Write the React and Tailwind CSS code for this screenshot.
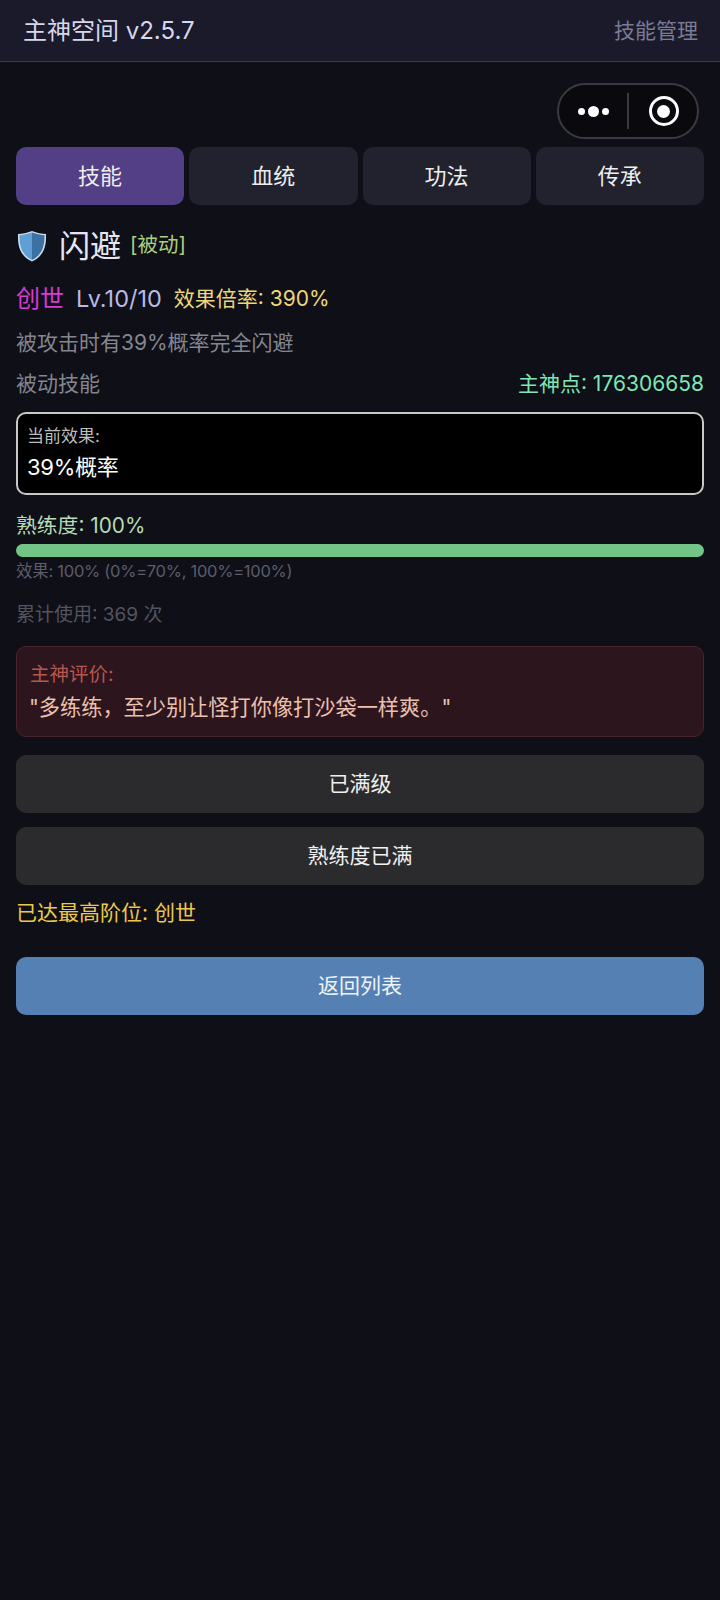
import React from 'react'

const tabs = ['技能', '血统', '功法', '传承']

function Shield() {
	return (
		<svg width="30" height="32" viewBox="0 0 30 32" className="shrink-0">
			<path d="M15 1 C20 3 25 4 29 4 C29.5 16 27 26 15 31.5 C3 26 .5 16 1 4 C5 4 10 3 15 1 Z" fill="#c9dcee" />
			<path d="M15 2.500 C11 4 6 5 2.500 5.200 C2.300 16 5 25 15 30 Z" fill="#5f9fd6" />
			<path d="M15 2.500 C19 4 24 5 27.500 5.200 C27.700 16 25 25 15 30 Z" fill="#3c72a3" />
		</svg>
	)
}

function Capsule() {
	return (
		<div className="absolute left-[557px] top-[83px] w-[142px] h-[56px] rounded-full border-2 border-[#3a3a40] bg-[#0a0a0e] flex items-center">
			<div className="w-[68px] flex items-center justify-center gap-[3px] pl-[1px]">
				<span className="w-[7px] h-[7px] rounded-full bg-white"></span>
				<span className="w-[11px] h-[11px] rounded-full bg-white"></span>
				<span className="w-[7px] h-[7px] rounded-full bg-white"></span>
			</div>
			<div className="w-[2px] h-[36px] bg-[#3a3a40]"></div>
			<div className="flex-1 flex items-center justify-center pl-[1px]">
				<div className="w-[30px] h-[30px] rounded-full border-[3px] border-white flex items-center justify-center">
					<span className="w-[13px] h-[13px] rounded-full bg-white"></span>
				</div>
			</div>
		</div>
	)
}

export default function App() {
	return (
		<div className="relative w-[720px] h-[1600px] bg-[#0e0f17] text-white font-['Inter','Noto_Sans_CJK_SC',sans-serif] overflow-hidden">
			<div className="h-[62px] bg-[#1a1a2a] border-b border-[#3a3b4c] pl-[23px] pr-[22px] flex items-center justify-between">
				<span className="text-[24px] text-[#d6d6ee]">主神空间 v2.5.7</span>
				<span className="text-[21px] text-[#7b7b95]">技能管理</span>
			</div>
			<Capsule />

			<div className="px-[16px] pt-[85px]">
				<div className="grid grid-cols-4 gap-[5px] h-[58px]">
					{tabs.map((t, i) => (
						<div key={t} className={`rounded-[10px] flex items-center justify-center text-[22px] text-[#eeeeee] ${i === 0 ? 'bg-[#523f85]' : 'bg-[#22222f]'}`}>{t}</div>
					))}
				</div>

				<div className="flex items-center mt-[24px] h-[34px] pl-[1px]">
					<Shield />
					<span className="ml-[12px] -mt-[2px] text-[31px] leading-none text-[#e6e6f2]">闪避</span>
					<span className="ml-[9px] -mt-[1px] text-[20.500px] text-[#a9cf7f]">[被动]</span>
				</div>

				<div className="flex items-center mt-[20px] h-[32px]">
					<span className="text-[24px] text-[#d93ad8]">创世</span>
					<span className="ml-[12px] text-[23.500px] text-[#b9b9e6]">Lv.10/10</span>
					<span className="ml-[12px] text-[21px] text-[#eed67a]">效果倍率: 390%</span>
				</div>

				<div className="mt-[13px] h-[30px] flex items-center text-[21px] text-[#85858f]">被攻击时有39%概率完全闪避</div>

				<div className="mt-[11px] h-[30px] flex items-center justify-between">
					<span className="text-[21px] text-[#85858f]">被动技能</span>
					<span className="text-[21px] text-[#7fe5b5]">主神点: 176306658</span>
				</div>

				<div className="mt-[13px] h-[83px] rounded-[10px] border-2 border-[#c8c8c8] bg-black px-[9px] pt-[8px]">
					<div className="text-[17px] leading-[28px] text-[#bdbdbd]">当前效果:</div>
					<div className="text-[22px] leading-[34px] tracking-[-0.3px] text-white">39%概率</div>
				</div>

				<div className="mt-[15px] h-[32px] flex items-center text-[20.800px] text-[#b5dcb5]">熟练度: 100%</div>
				<div className="mt-[2px] h-[13px] rounded-full bg-[#72c585]"></div>
				<div className="mt-[1px] h-[26px] flex items-center text-[16.500px] tracking-[-0.27px] text-[#5c5c6b]">效果: 100% (0%=70%, 100%=100%)</div>
				<div className="mt-[16px] h-[30px] flex items-center text-[19px] text-[#54545f]">累计使用: 369 次</div>

				<div className="mt-[16px] h-[91px] rounded-[10px] border border-[#47232b] bg-[#2c151d] pl-[12px] pr-[13px] pt-[13px]">
					<div className="pl-[1px] text-[19.500px] leading-[28px] text-[#b9564f]">主神评价:</div>
					<div className="text-[21.200px] leading-[32px] mt-[3px] text-[#ecc0ae]">"多练练，至少别让怪打你像打沙袋一样爽。"</div>
				</div>

				<div className="mt-[18px] h-[58px] rounded-[10px] bg-[#2b2b2e] flex items-center justify-center text-[21px] text-[#f0f0f0]">已满级</div>
				<div className="mt-[14px] h-[58px] rounded-[10px] bg-[#2b2b2e] flex items-center justify-center text-[21px] text-[#f0f0f0]">熟练度已满</div>
				<div className="mt-[12px] h-[32px] flex items-center text-[21px] text-[#edc948]">已达最高阶位: 创世</div>
				<div className="mt-[28px] h-[58px] rounded-[10px] bg-[#5580b3] flex items-center justify-center text-[21px] text-[#eef3f9]">返回列表</div>
			</div>
		</div>
	)
}
